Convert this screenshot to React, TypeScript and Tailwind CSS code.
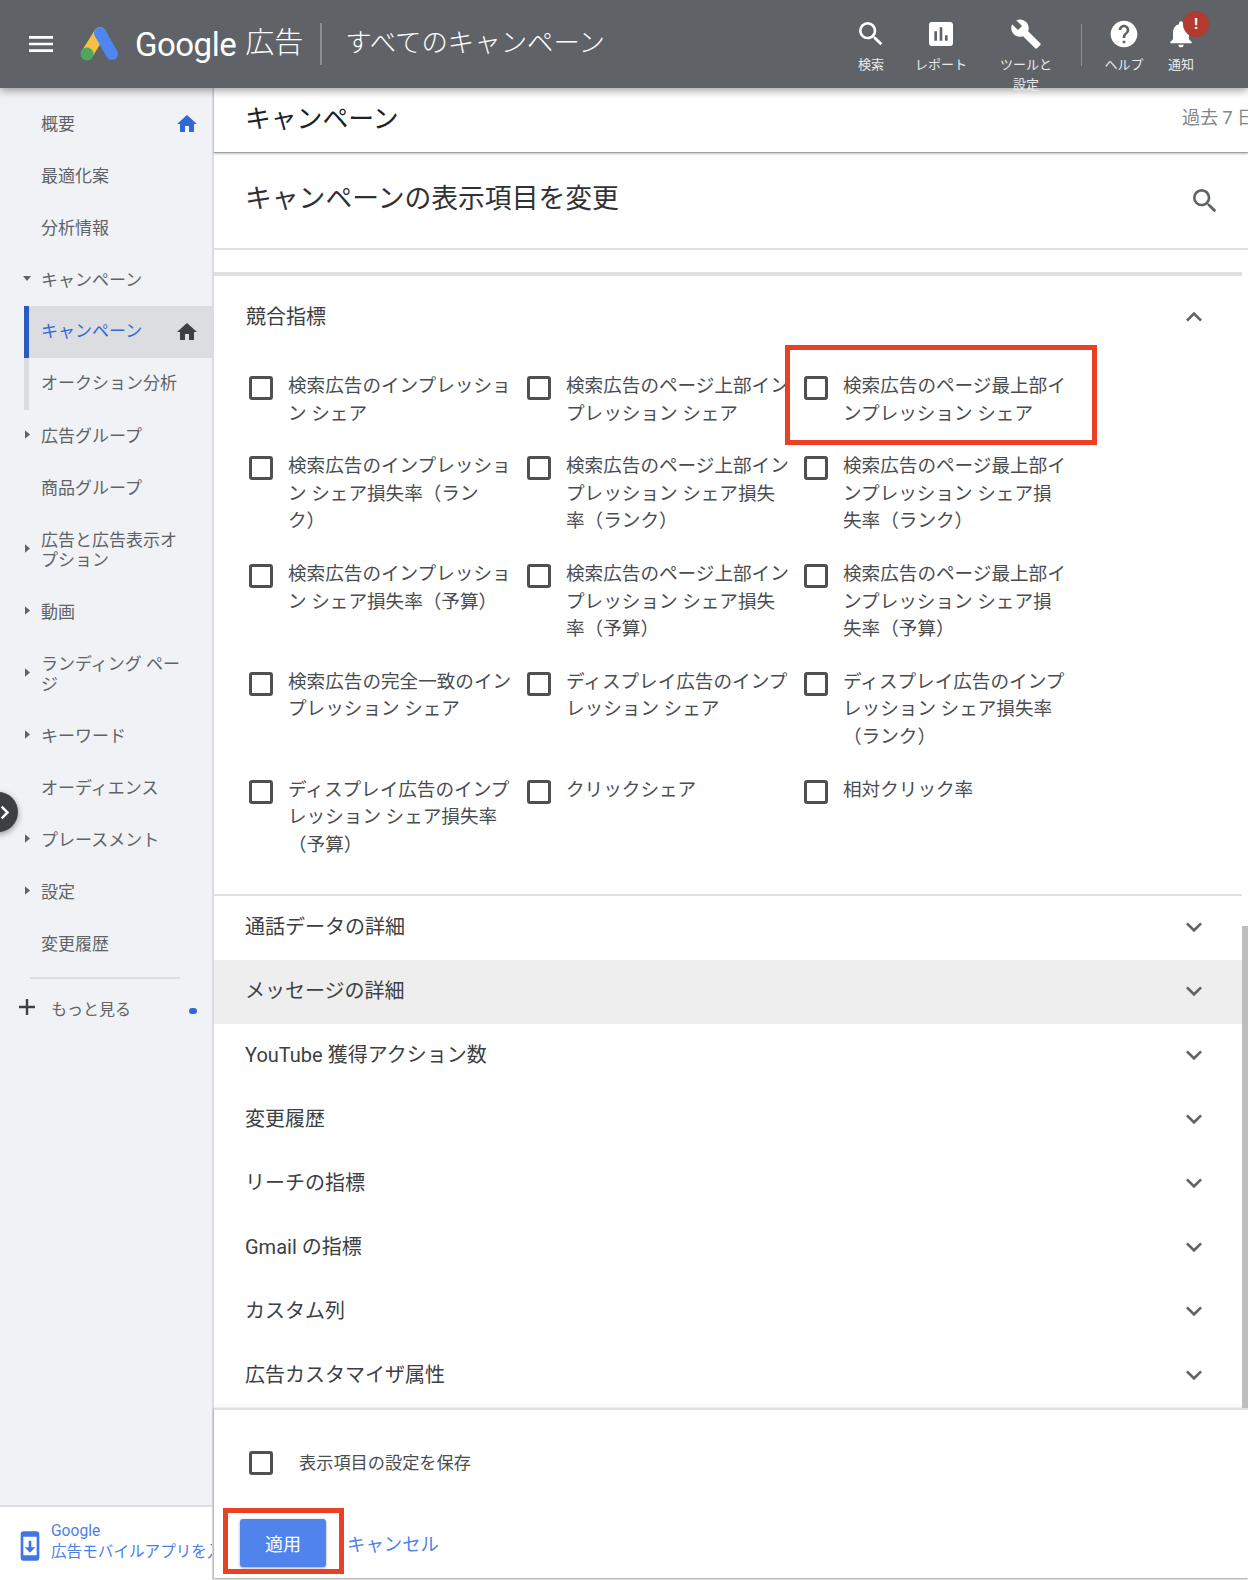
import React from 'react';

const paths = {
  search: 'M15.5 14h-.79l-.28-.27A6.471 6.471 0 0 0 16 9.5 6.5 6.5 0 1 0 9.5 16c1.61 0 3.09-.59 4.23-1.57l.27.28v.79l5 4.99L20.49 19l-4.99-5zm-6 0C7.01 14 5 11.99 5 9.5S7.01 5 9.5 5 14 7.01 14 9.5 11.99 14 9.5 14z',
  report: 'M19 3H5c-1.1 0-2 .9-2 2v14c0 1.1.9 2 2 2h14c1.1 0 2-.9 2-2V5c0-1.1-.9-2-2-2zM9 17H7v-7h2v7zm4 0h-2V7h2v10zm4 0h-2v-4h2v4z',
  build: 'M22.7 19l-9.1-9.1c.9-2.3.4-5-1.5-6.9-2-2-5-2.4-7.4-1.3L9 6 6 9 1.6 4.7C.4 7.1.9 10.1 2.9 12.1c1.9 1.9 4.6 2.4 6.9 1.5l9.1 9.1c.4.4 1 .4 1.4 0l2.3-2.3c.5-.4.5-1.1.1-1.4z',
  help: 'M12 2C6.48 2 2 6.48 2 12s4.48 10 10 10 10-4.48 10-10S17.52 2 12 2zm1 17h-2v-2h2v2zm2.07-7.75l-.9.92C13.45 12.9 13 13.5 13 15h-2v-.5c0-1.1.45-2.1 1.17-2.83l1.24-1.26c.37-.36.59-.86.59-1.41 0-1.1-.9-2-2-2s-2 .9-2 2H8c0-2.21 1.79-4 4-4s4 1.79 4 4c0 .88-.36 1.68-.93 2.25z',
  bell: 'M12 22c1.1 0 2-.9 2-2h-4c0 1.1.89 2 2 2zm6-6v-5c0-3.07-1.64-5.64-4.5-6.32V4c0-.83-.67-1.5-1.5-1.5s-1.5.67-1.5 1.5v.68C7.63 5.36 6 7.92 6 11v5l-2 2v1h16v-1l-2-2z',
  home: 'M10 20v-6h4v6h5v-8h3L12 3 2 12h3v8z',
  menu: 'M3 18h18v-2H3v2zm0-5h18v-2H3v2zm0-7v2h18V6H3z',
  down: 'M16.59 8.59L12 13.17 7.41 8.59 6 10l6 6 6-6z',
  up: 'M12 8l-6 6 1.41 1.41L12 10.83l4.59 4.58L18 14z',
  phone: 'M17 1.01L7 1c-1.1 0-2 .9-2 2v18c0 1.1.9 2 2 2h10c1.1 0 2-.9 2-2V3c0-1.1-.9-1.99-2-1.99zM17 19H7V5h10v14zm-1-6h-3V8h-2v5H8l4 4 4-4z',
};

const Icon = ({ d, className }: { d: string; className: string }) => (
  <svg viewBox="0 0 24 24" fill="currentColor" className={className}>
    <path d={d} />
  </svg>
);

const Checkbox = ({ className = '' }: { className?: string }) => (
  <div className={`w-6 h-6 shrink-0 border-[3px] border-[#505050] rounded-[3px] bg-white ${className}`} />
);

const HeaderItem = ({ d, label, width }: { d: string; label: string; width: string }) => (
  <div className={`flex flex-col items-center text-center ${width}`}>
    <Icon d={d} className="w-8 h-8 text-white" />
    <div className="mt-[5px] text-[13px] leading-5 text-[#e8eaed] whitespace-pre-line">{label}</div>
  </div>
);

type NavItem = {
  label: string;
  arrow?: 'right' | 'down';
  tall?: boolean;
  active?: boolean;
  sub?: boolean;
  home?: boolean;
};

const navItems: NavItem[] = [
  { label: '概要', home: true },
  { label: '最適化案' },
  { label: '分析情報' },
  { label: 'キャンペーン', arrow: 'down' },
  { label: 'キャンペーン', active: true, home: true },
  { label: 'オークション分析', sub: true },
  { label: '広告グループ', arrow: 'right' },
  { label: '商品グループ' },
  { label: '広告と広告表示オ\nプション', arrow: 'right', tall: true },
  { label: '動画', arrow: 'right' },
  { label: 'ランディング ペー\nジ', arrow: 'right', tall: true },
  { label: 'キーワード', arrow: 'right' },
  { label: 'オーディエンス' },
  { label: 'プレースメント', arrow: 'right' },
  { label: '設定', arrow: 'right' },
  { label: '変更履歴' },
];

const NavRow = ({ item }: { item: NavItem }) => {
  const height = item.tall ? 'h-[72px]' : 'h-[52px]';
  if (item.active || item.sub) {
    return (
      <div
        className={`${height} ml-6 flex items-center pl-3 border-l-[5px] ${
          item.active ? 'border-[#2a5cc0] bg-[#dcdde1]' : 'border-[#dadce0]'
        }`}
      >
        <span className={`text-[17px] ${item.active ? 'text-[#3367d6]' : 'text-[#5f6368]'}`}>{item.label}</span>
        {item.home && <Icon d={paths.home} className="ml-auto mr-[13px] w-6 h-6 text-[#3c4043]" />}
      </div>
    );
  }
  return (
    <div className={`${height} flex items-center pl-[23px]`}>
      <div className="w-[18px] shrink-0">
        {item.arrow === 'right' && (
          <svg viewBox="0 0 6 10" className="ml-[2px] -mt-1 w-[5px] h-[9px] text-[#5f6368]" fill="currentColor">
            <path d="M0 0l6 5-6 5z" />
          </svg>
        )}
        {item.arrow === 'down' && (
          <svg viewBox="0 0 8 5" className="w-2 h-[5px] -mt-1 text-[#5f6368]" fill="currentColor">
            <path d="M0 0h8L4 5z" />
          </svg>
        )}
      </div>
      <span className="text-[17px] leading-[20px] text-[#5f6368] whitespace-pre-line">{item.label}</span>
      {item.home && <Icon d={paths.home} className="ml-auto mr-[13px] w-6 h-6 text-[#3367d6]" />}
    </div>
  );
};

const metrics = [
  '検索広告のインプレッショ\nン シェア',
  '検索広告のページ上部イン\nプレッション シェア',
  '検索広告のページ最上部イ\nンプレッション シェア',
  '検索広告のインプレッショ\nン シェア損失率（ラン\nク）',
  '検索広告のページ上部イン\nプレッション シェア損失\n率（ランク）',
  '検索広告のページ最上部イ\nンプレッション シェア損\n失率（ランク）',
  '検索広告のインプレッショ\nン シェア損失率（予算）',
  '検索広告のページ上部イン\nプレッション シェア損失\n率（予算）',
  '検索広告のページ最上部イ\nンプレッション シェア損\n失率（予算）',
  '検索広告の完全一致のイン\nプレッション シェア',
  'ディスプレイ広告のインプ\nレッション シェア',
  'ディスプレイ広告のインプ\nレッション シェア損失率\n（ランク）',
  'ディスプレイ広告のインプ\nレッション シェア損失率\n（予算）',
  'クリックシェア',
  '相対クリック率',
];

const sections = [
  '通話データの詳細',
  'メッセージの詳細',
  'YouTube 獲得アクション数',
  '変更履歴',
  'リーチの指標',
  'Gmail の指標',
  'カスタム列',
  '広告カスタマイザ属性',
];

export default function App() {
  return (
    <div className="relative w-[1248px] h-[1580px] overflow-hidden bg-white flex flex-col font-['Roboto','Noto_Sans_CJK_JP',sans-serif]">
      {/* Top bar */}
      <header className="relative z-10 h-[88px] shrink-0 bg-[#5f6368] shadow-[0_3px_8px_rgba(0,0,0,0.35)] flex items-start text-white">
        <div className="flex items-center h-full pl-[25px]">
          <Icon d={paths.menu} className="w-8 h-8 text-white" />
          <svg viewBox="0 0 38 35" className="ml-[23px] w-[38px] h-[35px] -mt-[2px]">
            <path d="M7 28L20 7" stroke="#f4bf42" strokeWidth="12" strokeLinecap="round" fill="none" />
            <path d="M20 7l12 21" stroke="#4f86f0" strokeWidth="12" strokeLinecap="round" fill="none" />
            <circle cx="7" cy="28" r="6.5" fill="#4fa85a" />
          </svg>
          <span className="ml-[17px] mt-[2px] text-[33px] tracking-[-0.5px] text-white">Google</span>
          <span className="ml-[9px] text-[29px] font-light">広告</span>
          <div className="ml-[17px] w-[2px] h-[42px] bg-[#8b8f94]" />
          <span className="ml-[23px] -mt-[1px] text-[26.4px] font-light">すべてのキャンペーン</span>
        </div>
        <div className="ml-auto flex items-start pt-[18px] pr-[48px]">
          <HeaderItem d={paths.search} label="検索" width="w-[70px]" />
          <HeaderItem d={paths.report} label="レポート" width="w-[70px]" />
          <HeaderItem d={paths.build} label={'ツールと\n設定'} width="w-[100px]" />
          <div className="ml-[5px] mr-[4px] mt-[6px] w-[1px] h-[42px] bg-[#8b8f94]" />
          <HeaderItem d={paths.help} label="ヘルプ" width="w-[76px]" />
          <div className="relative">
            <HeaderItem d={paths.bell} label="通知" width="w-[38px]" />
            <div className="absolute left-[21px] -top-[7px] w-[26px] h-[26px] rounded-full bg-[#b23a2e] flex items-center justify-center text-[15px] font-bold text-white">
              !
            </div>
          </div>
        </div>
      </header>

      <div className="flex flex-1 min-h-0">
        {/* Side nav */}
        <aside className="w-[214px] shrink-0 bg-[#f1f2f5] border-r-2 border-[#dadce0] flex flex-col">
          <div className="pt-[10px] flex-1">
            {navItems.map((item, index) => (
              <NavRow key={index} item={item} />
            ))}
            <div className="mt-[7px] ml-[30px] w-[150px] h-[2px] bg-[#dadce0]" />
            <div className="h-[60px] flex items-center pl-[17px]">
              <svg viewBox="0 0 20 20" className="w-5 h-5 -mt-1 text-[#3c4043]" fill="currentColor">
                <path d="M8.8 2h2.4v6.8H18v2.4h-6.8V18H8.8v-6.8H2V8.8h6.8z" />
              </svg>
              <span className="ml-[14px] mt-[2px] text-[16px] text-[#5f6368]">もっと見る</span>
              <div className="ml-auto mr-[15px] mt-1 w-2 h-[6px] rounded-full bg-[#3367d6]" />
            </div>
          </div>
          <div className="h-[75px] bg-white border-t-2 border-[#dadce0] flex items-center pl-[15px] overflow-hidden">
            <Icon d={paths.phone} className="w-8 h-8 shrink-0 text-[#3f76e4] -ml-[1px] mt-1" />
            <div className="ml-[5px] text-[15.6px] leading-[21px] text-[#4b7fe6] whitespace-nowrap -mt-[4px]">
              <div>Google</div>
              <div>広告モバイルアプリを入手</div>
            </div>
          </div>
        </aside>

        {/* Main column */}
        <main className="flex-1 min-w-0 flex flex-col relative">
          <div className="h-[65px] shrink-0 flex items-center pb-[2px] pl-[31px] border-b border-[#9aa0a6] shadow-[0_1px_2px_rgba(0,0,0,0.25)] overflow-hidden">
            <span className="text-[25.8px] text-[#202124]">キャンペーン</span>
            <span className="ml-auto -mr-[7px] -mt-[3px] text-[18px] text-[#80868b] whitespace-nowrap">過去 7 日</span>
          </div>

          <div className="h-[97px] shrink-0 flex items-center pb-[3px] pl-[31px] pr-[27px] border-b-2 border-[#e0e0e0]">
            <span className="text-[26.8px] text-[#303134]">キャンペーンの表示項目を変更</span>
            <Icon d={paths.search} className="ml-auto mt-[3px] w-8 h-8 text-[#5f6368]" />
          </div>

          <div className="mt-[22px] mr-[6px] h-1 shrink-0 bg-[#e0e0e0]" />

          <section className="mr-[6px] pb-[9.6px] border-b-2 border-[#e0e0e0]">
            <div className="h-[82px] flex items-center justify-between pl-[32px] pr-[32px]">
              <span className="text-[20px] text-[#3c4043]">競合指標</span>
              <Icon d={paths.up} className="w-8 h-8 text-[#5f6368]" />
            </div>
            <div className="mt-[15px] pl-[35px] grid grid-cols-[278px_277px_277px]">
              {metrics.map((text, index) => (
                <div key={index} className="flex gap-[15px] pb-[25px]">
                  <Checkbox className="mt-[3px]" />
                  <span className="text-[18.6px] leading-[27.6px] text-[#4a4d50] whitespace-pre-line">{text}</span>
                </div>
              ))}
            </div>
          </section>

          <div className="mr-[6px]">
            {sections.map((title, index) => (
              <div
                key={title}
                className={`h-16 flex items-center justify-between pl-[31px] pr-[32px] pb-[1px] ${index === 1 ? 'bg-[#eeeeee]' : ''}`}
              >
                <span className="text-[20px] text-[#3c4043]">{title}</span>
                <Icon d={paths.down} className="w-8 h-8 text-[#5f6368]" />
              </div>
            ))}
          </div>

          <footer className="flex-1 border-t-2 border-[#e0e0e0] mb-[2px] shadow-[0_1px_2px_rgba(0,0,0,0.4),0_-2px_4px_rgba(0,0,0,0.05)]">
            <div className="mt-[39px] pl-[35px] flex items-center">
              <Checkbox />
              <span className="ml-[26px] mt-[2px] text-[17.2px] text-[#4a4d50]">表示項目の設定を保存</span>
            </div>
            <div className="mt-[42px] pl-[26px] flex items-center">
              <div className="relative">
                <button className="w-[86px] h-12 pt-[3px] rounded-[3px] bg-[#5083ec] shadow-[0_1px_3px_rgba(0,0,0,0.35)] text-[18px] text-white">
                  適用
                </button>
                <div className="absolute -left-[17px] -top-[11px] w-[121px] h-[66px] border-[5px] border-[#ea4026]" />
              </div>
              <span className="ml-[21px] mt-[4px] text-[18.4px] text-[#5083ec]">キャンセル</span>
            </div>
          </footer>

          {/* Scrollbar thumb and the highlight box over the third metric */}
          <div className="absolute right-0 top-[838px] bottom-[172px] w-[6px] bg-[#bdbdbd]" />
          <div className="absolute left-[571px] top-[257px] w-[312px] h-[100px] border-[5px] border-[#ea4026]" />
        </main>
      </div>

      {/* Side nav toggle */}
      <div className="absolute -left-[22px] top-[792px] z-20 w-10 h-10 rounded-full bg-[#3c4043] shadow-[0_2px_6px_rgba(0,0,0,0.4)] flex items-center justify-end pr-2">
        <svg viewBox="0 0 12 18" className="w-[10px] h-[15px]" fill="none" stroke="white" strokeWidth="3">
          <path d="M2 2l7 7-7 7" />
        </svg>
      </div>
    </div>
  );
}
